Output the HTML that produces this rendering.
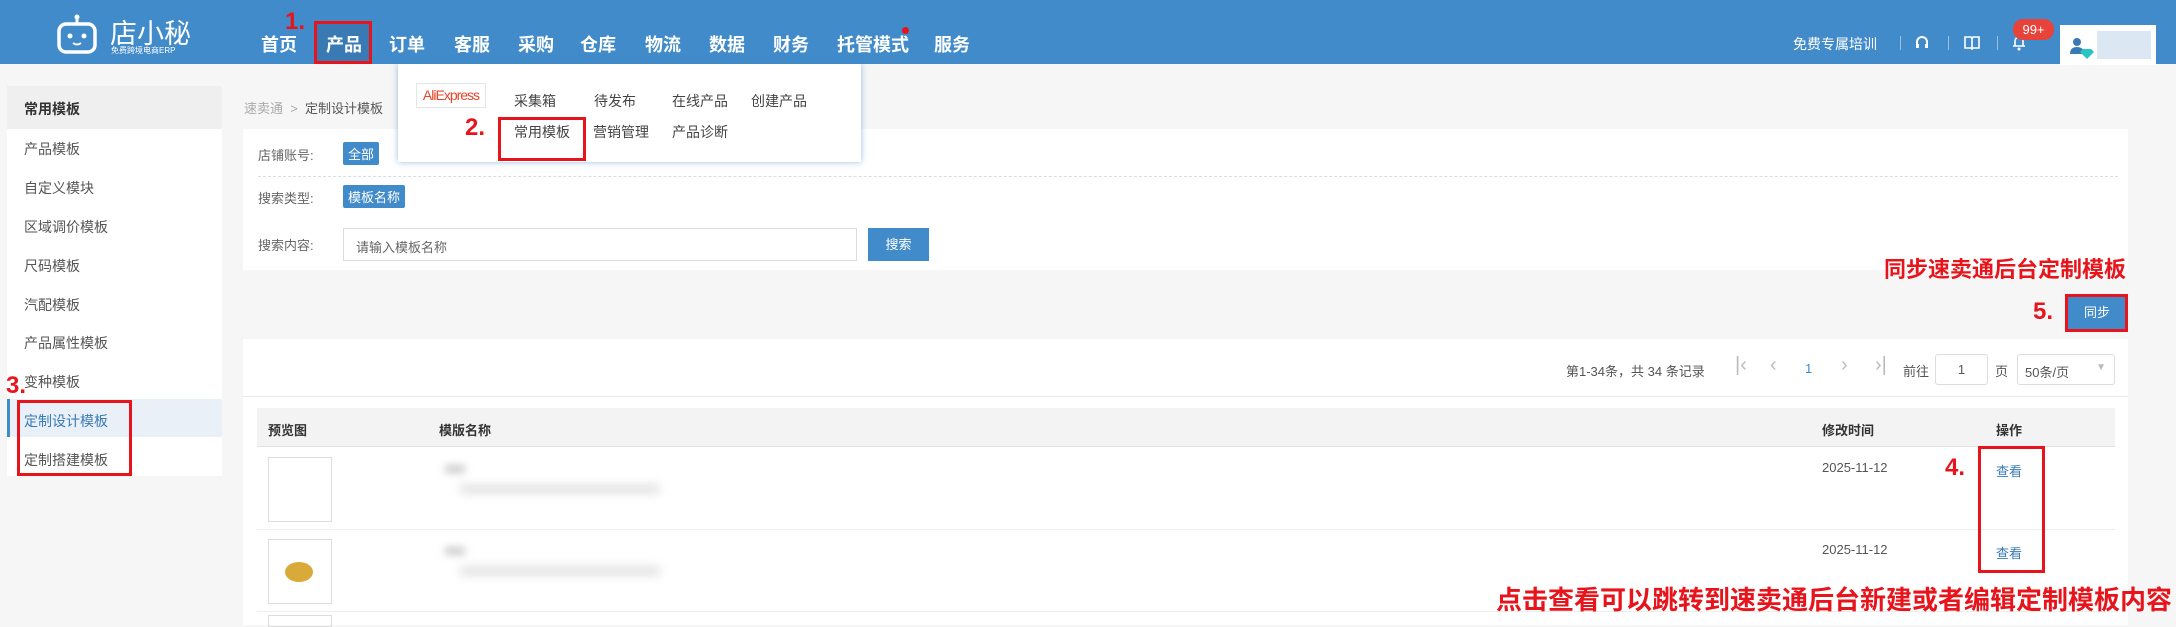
<!DOCTYPE html>
<html><head><meta charset="utf-8"><style>
*{margin:0;padding:0;box-sizing:border-box}
body{width:2176px;height:625px;overflow:hidden;background:#f6f6f6;font-family:"Liberation Sans","Noto Sans CJK SC",sans-serif;font-size:14px;color:#555;position:relative}
.a{position:absolute;white-space:nowrap}
.hdr{position:absolute;left:0;top:0;width:2176px;height:64px;background:#428bca}
.nav{color:#fff;font-size:18px;font-weight:bold;top:31px}
.red{color:#e8141c;font-weight:bold}
.panel{position:absolute;background:#fff}
.side div.it{position:absolute;left:25px;font-size:14px;color:#555}
.tag{position:absolute;background:#428bca;color:#fff;font-size:13px;padding:2px 5px;border-radius:2px}
.lbl{position:absolute;left:258px;font-size:13px;color:#666}
.box{position:absolute;border:3px solid #e8141c}
.pg{font-size:13px;color:#555;top:361px}
</style></head><body>
<div class="hdr"></div>
<svg class="a" style="left:55px;top:14px" width="44" height="42" viewBox="0 0 44 42"><line x1="22" y1="2" x2="22" y2="9" stroke="#fff" stroke-width="3"/><circle cx="22" cy="3" r="2.5" fill="#fff"/><rect x="4" y="10" width="36" height="28" rx="7" fill="none" stroke="#fff" stroke-width="3.5"/><circle cx="15" cy="22" r="2.5" fill="#fff"/><circle cx="29" cy="22" r="2.5" fill="#fff"/><path d="M18 29 Q22 32 26 29" stroke="#fff" stroke-width="2" fill="none"/></svg>
<div class="a" style="left:110px;top:12px;color:#fff;font-size:27px">店小秘</div>
<div class="a" style="left:111px;top:45px;color:#fff;font-size:8px">免费跨境电商ERP</div>
<div class="a nav" style="left:261px">首页</div>
<div class="a" style="left:314px;top:21px;width:58px;height:43px;background:#3a7ab4"></div>
<div class="a nav" style="left:326px">产品</div>
<div class="a nav" style="left:389px">订单</div>
<div class="a nav" style="left:454px">客服</div>
<div class="a nav" style="left:518px">采购</div>
<div class="a nav" style="left:580px">仓库</div>
<div class="a nav" style="left:645px">物流</div>
<div class="a nav" style="left:709px">数据</div>
<div class="a nav" style="left:773px">财务</div>
<div class="a nav" style="left:837px">托管模式</div>
<div class="a" style="left:902px;top:27px;width:7px;height:7px;border-radius:50%;background:#e8141c"></div>
<div class="a nav" style="left:934px">服务</div>
<div class="box" style="left:314px;top:21px;width:58px;height:43px"></div>
<div class="a red" style="left:285px;top:8px;font-size:24px">1.</div>
<div class="a" style="left:1793px;top:34px;color:#fff;font-size:14px">免费专属培训</div>
<div class="a" style="left:1900px;top:36px;width:1px;height:14px;background:#9cc0e0"></div>
<svg class="a" style="left:1915px;top:35px" width="14" height="16"><path d="M2 11 V7 A5 5 0 0 1 12 7 V11" stroke="#fff" stroke-width="2" fill="none"/><rect x="1" y="9" width="3" height="4" fill="#fff"/><rect x="10" y="9" width="3" height="4" fill="#fff"/></svg>
<div class="a" style="left:1948px;top:36px;width:1px;height:14px;background:#9cc0e0"></div>
<svg class="a" style="left:1964px;top:36px" width="16" height="14"><path d="M1 1 H7 L8 3 L9 1 H15 V12 H9 L8 13 L7 12 H1 Z M8 3 V12" stroke="#fff" stroke-width="1.6" fill="none"/></svg>
<div class="a" style="left:1997px;top:36px;width:1px;height:14px;background:#9cc0e0"></div>
<svg class="a" style="left:2012px;top:34px" width="14" height="18"><path d="M3 12 V7 A4 4 0 0 1 11 7 V12 Z M1 12 H13" stroke="#fff" stroke-width="1.6" fill="none"/><circle cx="7" cy="15" r="1.5" fill="#fff"/></svg>
<div class="a" style="left:2013px;top:19px;width:41px;height:21px;border-radius:10px;background:#e8433a;color:#fff;font-size:13px;text-align:center;line-height:21px">99+</div>
<div class="a" style="left:2060px;top:25px;width:96px;height:40px;background:#fff"></div>
<div class="a" style="left:2097px;top:31px;width:54px;height:28px;background:#dbe7f3"></div>
<svg class="a" style="left:2069px;top:37px" width="30" height="22"><circle cx="8" cy="5" r="4" fill="#3a7ab4"/><path d="M1 17 Q1 10 8 10 Q15 10 15 17 Z" fill="#3a7ab4"/><path d="M14 12 L22 12 L25 15 L18 22 L11 15 Z" fill="#29c5c5"/></svg>

<div class="panel side" style="left:7px;top:86px;width:215px;height:390px">
<div style="position:absolute;left:0;top:0;width:215px;height:43px;background:#efefef"></div>
<div class="it" style="top:13px;left:17px;color:#333;font-weight:bold">常用模板</div>
<div class="it" style="top:53px;left:17px">产品模板</div>
<div class="it" style="top:92px;left:17px">自定义模块</div>
<div class="it" style="top:131px;left:17px">区域调价模板</div>
<div class="it" style="top:170px;left:17px">尺码模板</div>
<div class="it" style="top:209px;left:17px">汽配模板</div>
<div class="it" style="top:247px;left:17px">产品属性模板</div>
<div class="it" style="top:286px;left:17px">变种模板</div>
<div style="position:absolute;left:0;top:313px;width:215px;height:38px;background:#eaf0f8;border-left:3px solid #428bca"></div>
<div class="it" style="top:325px;left:17px;color:#3a7ab4">定制设计模板</div>
<div class="it" style="top:364px;left:17px">定制搭建模板</div>
</div>
<div class="box" style="left:17px;top:400px;width:115px;height:76px"></div>
<div class="a red" style="left:6px;top:372px;font-size:24px">3.</div>

<div class="a" style="left:244px;top:98px;font-size:13px;color:#aaa">速卖通 &nbsp;&gt;&nbsp; <span style="color:#555">定制设计模板</span></div>

<div class="panel" style="left:243px;top:129px;width:1885px;height:141px"></div>
<div class="lbl" style="top:145px">店铺账号:</div>
<div class="tag" style="left:343px;top:142px">全部</div>
<div class="a" style="left:258px;top:176px;width:1860px;border-top:1px dashed #ddd"></div>
<div class="lbl" style="top:188px">搜索类型:</div>
<div class="tag" style="left:343px;top:185px">模板名称</div>
<div class="lbl" style="top:235px">搜索内容:</div>
<div class="a" style="left:343px;top:228px;width:514px;height:33px;border:1px solid #ddd;background:#fff;font-size:13px;color:#666;padding:8px 12px">请输入模板名称</div>
<div class="a" style="left:868px;top:228px;width:61px;height:33px;background:#428bca;color:#fff;font-size:13px;text-align:center;line-height:33px">搜索</div>

<div class="a" style="left:398px;top:64px;width:463px;height:98px;background:#fff;box-shadow:0 0 6px rgba(66,139,202,.55)"></div>
<div class="a" style="left:416px;top:83px;width:70px;height:25px;border:1px solid #e5e5e5;font-size:14px;color:#e8432a;text-align:center;line-height:23px;letter-spacing:-1px">AliExpress</div>
<div class="a" style="left:514px;top:91px;font-size:14px;color:#444">采集箱</div>
<div class="a" style="left:594px;top:91px;font-size:14px;color:#444">待发布</div>
<div class="a" style="left:672px;top:91px;font-size:14px;color:#444">在线产品</div>
<div class="a" style="left:751px;top:91px;font-size:14px;color:#444">创建产品</div>
<div class="a" style="left:514px;top:122px;font-size:14px;color:#444">常用模板</div>
<div class="a" style="left:593px;top:122px;font-size:14px;color:#444">营销管理</div>
<div class="a" style="left:672px;top:122px;font-size:14px;color:#444">产品诊断</div>
<div class="box" style="left:498px;top:117px;width:88px;height:44px"></div>
<div class="a red" style="left:465px;top:114px;font-size:24px">2.</div>

<div class="a red" style="left:1884px;top:252px;font-size:22px">同步速卖通后台定制模板</div>
<div class="a" style="left:2068px;top:296px;width:58px;height:33px;background:#428bca;color:#fff;font-size:13px;text-align:center;line-height:33px">同步</div>
<div class="box" style="left:2065px;top:294px;width:63px;height:38px"></div>
<div class="a red" style="left:2033px;top:298px;font-size:24px">5.</div>

<div class="panel" style="left:243px;top:339px;width:1885px;height:286px"></div>
<div class="a pg" style="left:1566px">第1-34条，共 34 条记录</div>
<div class="a pg" style="left:1735px;color:#bbb;font-size:20px;top:354px">|‹</div>
<div class="a pg" style="left:1770px;color:#bbb;font-size:20px;top:354px">‹</div>
<div class="a pg" style="left:1805px;color:#428bca">1</div>
<div class="a pg" style="left:1841px;color:#bbb;font-size:20px;top:354px">›</div>
<div class="a pg" style="left:1875px;color:#bbb;font-size:20px;top:354px">›|</div>
<div class="a pg" style="left:1903px">前往</div>
<div class="a" style="left:1935px;top:354px;width:53px;height:31px;border:1px solid #ddd;border-radius:3px;font-size:13px;text-align:center;line-height:29px">1</div>
<div class="a pg" style="left:1995px">页</div>
<div class="a" style="left:2017px;top:354px;width:98px;height:31px;border:1px solid #ddd;border-radius:3px;font-size:13px;padding:7px 7px">50条/页<span style="position:absolute;right:8px;top:7px;color:#bbb;font-size:10px">▼</span></div>
<div class="a" style="left:243px;top:396px;width:1885px;height:1px;background:#e8e8e8"></div>
<div class="a" style="left:257px;top:408px;width:1858px;height:39px;background:#f3f3f3;border-bottom:1px solid #e2e2e2"></div>
<div class="a" style="left:268px;top:420px;font-size:13px;font-weight:bold;color:#333">预览图</div>
<div class="a" style="left:439px;top:420px;font-size:13px;font-weight:bold;color:#333">模版名称</div>
<div class="a" style="left:1822px;top:420px;font-size:13px;font-weight:bold;color:#333">修改时间</div>
<div class="a" style="left:1996px;top:420px;font-size:13px;font-weight:bold;color:#333">操作</div>
<div class="a" style="left:257px;top:529px;width:1858px;height:1px;background:#eee"></div>
<div class="a" style="left:257px;top:611px;width:1858px;height:1px;background:#eee"></div>
<div class="a" style="left:268px;top:457px;width:64px;height:65px;border:1px solid #ddd"></div>
<div class="a" style="left:268px;top:539px;width:64px;height:65px;border:1px solid #ddd"></div>
<div class="a" style="left:285px;top:562px;width:28px;height:20px;border-radius:50%;background:#d9aa3a"></div>
<div class="a" style="left:268px;top:615px;width:64px;height:12px;border:1px solid #ddd"></div>
<div class="a" style="left:445px;top:465px;width:20px;height:8px;background:#ccc;filter:blur(4px)"></div>
<div class="a" style="left:460px;top:485px;width:200px;height:8px;background:#ddd;filter:blur(5px)"></div>
<div class="a" style="left:445px;top:547px;width:20px;height:8px;background:#ccc;filter:blur(4px)"></div>
<div class="a" style="left:460px;top:567px;width:200px;height:8px;background:#ddd;filter:blur(5px)"></div>
<div class="a" style="left:1822px;top:460px;font-size:13px;color:#555">2025-11-12</div>
<div class="a" style="left:1822px;top:542px;font-size:13px;color:#555">2025-11-12</div>
<div class="a" style="left:1996px;top:461px;font-size:13px;color:#3a7ab4">查看</div>
<div class="a" style="left:1996px;top:543px;font-size:13px;color:#3a7ab4">查看</div>
<div class="box" style="left:1978px;top:446px;width:67px;height:127px"></div>
<div class="a red" style="left:1945px;top:454px;font-size:24px">4.</div>
<div class="a red" style="left:1496px;top:580px;font-size:26px">点击查看可以跳转到速卖通后台新建或者编辑定制模板内容</div>
</body></html>
